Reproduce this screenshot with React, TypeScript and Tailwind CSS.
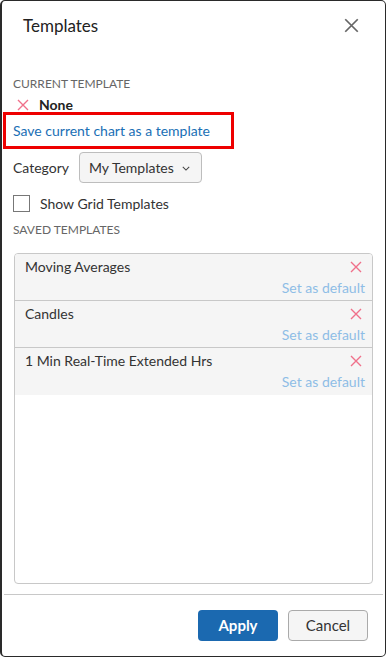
import React from "react";

const templates = ["Moving Averages", "Candles", "1 Min Real-Time Extended Hrs"];

function XMark({ className }: { className?: string }) {
  return (
    <svg viewBox="0 0 12 12" className={className} fill="none" stroke="currentColor" strokeWidth={1.4}>
      <path d="M1 1 L11 11 M11 1 L1 11" />
    </svg>
  );
}

export default function App() {
  return (
    <div className="flex h-[657px] w-[386px] flex-col rounded-[5px] border border-l-2 border-[#2a2a2a] bg-white font-['Lato','Noto_Sans',sans-serif] text-[14px] text-[#333]">
      <div className="flex h-[52px] items-center justify-between pl-[21px] pr-[26px]">
        <h1 className="text-[17px] text-[#222]">Templates</h1>
        <button className="text-[#666]">
          <XMark className="h-[15px] w-[15px]" />
        </button>
      </div>

      <div className="flex flex-1 flex-col px-[11px] pt-[27px]">
        <div className="text-[12px] leading-[14px] text-[#666]">CURRENT TEMPLATE</div>
        <div className="mt-[3px] flex items-center gap-[10px] pl-[4px]">
          <XMark className="h-[12px] w-[12px] text-[#f0708a]" />
          <span className="font-bold text-[#222]">None</span>
        </div>
        <div className="-ml-[10px] -mt-[3px] w-[231px] border-[3px] border-[#ee0000] py-[5px] pl-[7px]">
          <a className="text-[14px] text-[#1a6fb5]">Save current chart as a template</a>
        </div>

        <div className="mt-[3px] flex items-center gap-[10px]">
          <span className="text-[14px]">Category</span>
          <button className="flex h-[31px] w-[123px] items-center gap-[8px] rounded-[4px] border border-[#bdbdbd] bg-[#f5f5f5] pl-[9px] text-[14px] text-[#333]">
            My Templates
            <svg viewBox="0 0 10 6" className="mt-[2px] h-[5px] w-[8px]" fill="none" stroke="#444" strokeWidth={1.3}>
              <path d="M1 1 L5 5 L9 1" />
            </svg>
          </button>
        </div>

        <label className="mt-[10px] flex items-center gap-[10px]">
          <span className="h-[17px] w-[17px] border border-[#777] bg-white" />
          <span>Show Grid Templates</span>
        </label>

        <div className="mt-[9px] text-[12px] leading-[14px] text-[#666]">SAVED TEMPLATES</div>

        <div className="mx-[1px] mt-[16px] h-[331px] overflow-hidden rounded-[4px] border border-[#c8c8c8]">
          {templates.map((t, i) => (
            <div
              key={t}
              className={`flex h-[47px] flex-col bg-[#f5f5f5] pl-[10px] pr-[7px] ${i < templates.length - 1 ? "border-b border-[#c8c8c8]" : ""}`}
            >
              <div className="flex items-center justify-between pt-[2px]">
                <span className="text-[14px] leading-[21px] text-[#333]">{t}</span>
                <XMark className="mr-[3px] h-[12px] w-[12px] text-[#f0708a]" />
              </div>
              <div className="mt-[1px] text-right text-[14px] leading-[20px] text-[#8ebde6]">Set as default</div>
            </div>
          ))}
        </div>
      </div>

      <div className="mx-[2px] mt-[10px] border-t border-[#c8c8c8]" />
      <div className="flex justify-end gap-[10px] px-[17px] pb-[15px] pt-[15px]">
        <button className="h-[31px] w-[80px] rounded-[4px] bg-[#1b69b0] text-[15px] font-bold text-white">Apply</button>
        <button className="h-[31px] w-[80px] rounded-[4px] border border-[#aaa] bg-[#f5f5f5] text-[15px] text-[#333]">Cancel</button>
      </div>
    </div>
  );
}
